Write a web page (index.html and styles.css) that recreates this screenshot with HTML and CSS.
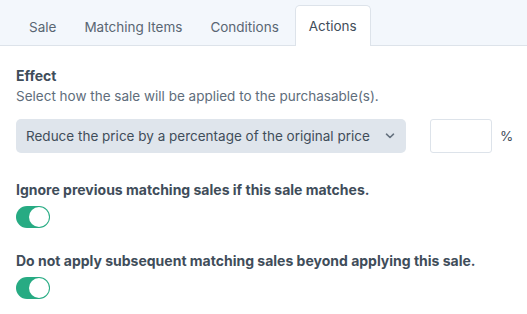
FILE: index.html
```html
<!DOCTYPE html>
<html lang="en">
<head>
    <meta charset="UTF-8">
    <title>Sale Actions</title>
    <link rel="stylesheet" href="styles.css">
</head>
<body>
    <div class="tabs">
        <a class="tab">Sale</a>
        <a class="tab">Matching Items</a>
        <a class="tab">Conditions</a>
        <a class="tab active">Actions</a>
    </div>

    <div class="content">
        <div class="field effect">
            <div class="heading">Effect</div>
            <div class="instructions">Select how the sale will be applied to the purchasable(s).</div>
            <div class="effect-row">
                <div class="select">
                    <span>Reduce the price by a percentage of the original price</span>
                    <svg class="chevron" width="10" height="6" viewBox="0 0 10 6">
                        <path d="M1.5 1.2 L5 4.5 L8.5 1.2" fill="none" stroke="#66727f" stroke-width="1.6" stroke-linecap="round" stroke-linejoin="round"/>
                    </svg>
                </div>
                <div class="amount"></div>
                <span class="unit">%</span>
            </div>
        </div>

        <div class="field">
            <div class="heading">Ignore previous matching sales if this sale matches.</div>
            <div class="lightswitch on"><div class="knob"></div></div>
        </div>

        <div class="field">
            <div class="heading">Do not apply subsequent matching sales beyond applying this sale.</div>
            <div class="lightswitch on"><div class="knob"></div></div>
        </div>
    </div>
</body>
</html>
```

FILE: styles.css
```css
* {
    margin: 0;
    padding: 0;
    box-sizing: border-box;
}

body {
    width: 527px;
    height: 314px;
    background: #fff;
    font-family: 'Inter', 'Liberation Sans', sans-serif;
    font-size: 13.5px;
    color: #3f4d5a;
    overflow: hidden;
}

/* Tab bar */
.tabs {
    display: flex;
    align-items: flex-end;
    height: 46px;
    padding-left: 15px;
    background: #f3f7fc;
    border-bottom: 1px solid #dde3ea;
}

.tab {
    display: flex;
    align-items: center;
    height: 40px;
    padding: 0 13px;
    margin-bottom: -1px;
    color: #596673;
    border: 1px solid transparent;
    border-bottom: none;
    border-radius: 5px 5px 0 0;
}

.tab.active {
    height: 41px;
    background: #fff;
    color: #3f4d5a;
    border-color: #dde3ea;
    margin-left: 2px;
}

/* Fields */
.content {
    padding: 20px 16px 0;
}

.field {
    margin-bottom: 23px;
}

.field.effect {
    margin-bottom: 27px;
}

.heading {
    font-weight: 700;
    font-size: 14px;
    line-height: 20px;
    color: #3f4d5a;
}

.instructions {
    color: #606d7b;
    line-height: 20px;
    margin-bottom: 13px;
}

.effect-row {
    display: flex;
    align-items: center;
}

.select {
    display: flex;
    flex-shrink: 0;
    align-items: center;
    justify-content: space-between;
    width: 390px;
    height: 34px;
    padding: 0 11px 0 10px;
    background: #dfe5ec;
    border-radius: 5px;
    color: #3f4d5a;
}

.amount {
    flex-shrink: 0;
    width: 62px;
    height: 34px;
    margin-left: 24px;
    border: 1px solid #dde3ea;
    border-radius: 3px;
    background: #fff;
}

.unit {
    margin-left: 8px;
    color: #3f4d5a;
}

/* Lightswitch */
.lightswitch {
    position: relative;
    width: 34px;
    height: 22px;
    margin-top: 6px;
    border-radius: 11px;
    background: #27ab83;
}

.lightswitch .knob {
    position: absolute;
    top: 1px;
    right: 1px;
    width: 20px;
    height: 20px;
    border-radius: 50%;
    background: #fff;
}
```
